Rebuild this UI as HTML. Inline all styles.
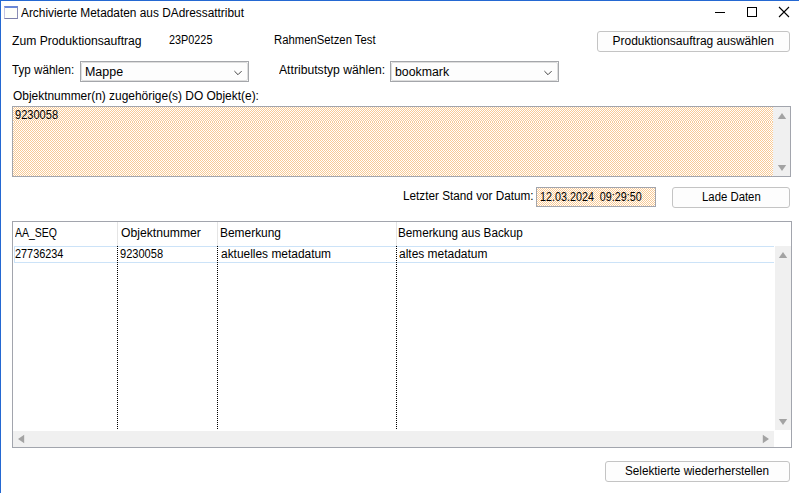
<!DOCTYPE html>
<html><head><meta charset="utf-8">
<style>
html,body{margin:0;padding:0;}
body{width:799px;height:493px;position:relative;overflow:hidden;background:#ffffff;}
.a{position:absolute;box-sizing:border-box;}
.t{position:absolute;font-family:"Liberation Sans",sans-serif;font-size:12px;line-height:14px;white-space:pre;color:#000;transform-origin:0 0;}
.btn{position:absolute;box-sizing:border-box;border:1px solid #c4c4c4;border-radius:3px;background:#fdfdfd;}
.combo{position:absolute;box-sizing:border-box;border:1px solid #a4a6aa;background:#fdfdfd;}
.combo .in{position:absolute;left:0;top:0;right:0;bottom:0;border:1px solid #dedede;border-radius:2px;}
.chk{background-color:#fff;background-image:conic-gradient(#f9ca95 25%,#fff 0 50%,#f9ca95 0 75%,#fff 0);background-size:2px 2px;}
.sb{position:absolute;background:#f0f0f0;}
.tri{position:absolute;width:0;height:0;}
.vdot{position:absolute;width:1px;background-image:linear-gradient(#000 50%,transparent 50%);background-size:1px 2px;}
</style></head><body>
<!-- window border -->
<div class="a" style="left:0;top:0;width:799px;height:1px;background:#2468d2"></div>
<div class="a" style="left:0;top:0;width:1px;height:493px;background:#2468d2"></div>

<!-- title icon -->
<div class="a" style="left:4px;top:6px;width:14px;height:13px;background:#fefefa;border-left:1px solid #c4c4e4;border-right:1px solid #8a8cb4;border-bottom:1px solid #7c7eaa;border-top:2px solid #6a88d8"></div>
<div class="t" style="left:21px;top:6px;transform:scaleX(0.989)">Archivierte Metadaten aus DAdressattribut</div>

<!-- caption buttons -->
<div class="a" style="left:715px;top:12px;width:10px;height:1px;background:#000"></div>
<div class="a" style="left:747px;top:7px;width:10px;height:10px;border:1px solid #000"></div>
<svg class="a" style="left:778px;top:6px" width="12" height="12" viewBox="0 0 12 12"><path d="M1 1L11 11M11 1L1 11" stroke="#000" stroke-width="1.1" fill="none"/></svg>

<!-- row 1 -->
<div class="t" style="left:12px;top:34px;transform:scaleX(1.012)">Zum Produktionsauftrag</div>
<div class="t" style="left:169.1px;top:33px;transform:scaleX(0.904)">23P0225</div>
<div class="t" style="left:273.9px;top:33px;transform:scaleX(0.942)">RahmenSetzen Test</div>
<div class="btn" style="left:597px;top:31px;width:193px;height:21px"></div>
<div class="t" style="left:612.5px;top:34px">Produktionsauftrag auswählen</div>

<!-- row 2 -->
<div class="t" style="left:12px;top:63px;transform:scaleX(0.970)">Typ wählen:</div>
<div class="combo" style="left:80px;top:61px;width:169px;height:21px"><div class="in"></div></div>
<div class="t" style="left:84.6px;top:65px;transform:scaleX(1.037)">Mappe</div>
<svg class="a" style="left:233px;top:70px" width="10" height="6" viewBox="0 0 10 6"><path d="M1.4 1.1L5 4.7L8.6 1.1" stroke="#444" stroke-width="1" fill="none"/></svg>

<div class="t" style="left:278.5px;top:63px;transform:scaleX(1.014)">Attributstyp wählen:</div>
<div class="combo" style="left:390px;top:61px;width:169px;height:21px"><div class="in"></div></div>
<div class="t" style="left:394.6px;top:65px;transform:scaleX(1.027)">bookmark</div>
<svg class="a" style="left:543px;top:70px" width="10" height="6" viewBox="0 0 10 6"><path d="M1.4 1.1L5 4.7L8.6 1.1" stroke="#444" stroke-width="1" fill="none"/></svg>

<!-- label + textarea -->
<div class="t" style="left:12.5px;top:89px;transform:scaleX(0.994)">Objektnummer(n) zugehörige(s) DO Objekt(e):</div>
<div class="a chk" style="left:12px;top:106px;width:779px;height:71px;border:1px solid #a2a5ad"></div>
<div class="a chk" style="left:13px;top:122px;width:760px;height:54px"></div>
<div class="sb" style="left:773px;top:107px;width:17px;height:69px"></div>
<svg class="a" style="left:777px;top:111px" width="10" height="9" viewBox="0 0 10 9"><path d="M0.8 8L5 2L9.2 8Z" fill="#a3a3a3"/></svg>
<svg class="a" style="left:777px;top:163px" width="10" height="9" viewBox="0 0 10 9"><path d="M0.8 2L5 8L9.2 2Z" fill="#a3a3a3"/></svg>
<div class="t" style="left:14.6px;top:108px;transform:scaleX(0.922)">9230058</div>

<!-- date row -->
<div class="t" style="left:402.8px;top:189px;transform:scaleX(0.979)">Letzter Stand vor Datum:</div>
<div class="a chk" style="left:536px;top:187px;width:120px;height:20px;border:1px solid #a2a5ad"></div>
<div class="t" style="left:539.6px;top:190px;transform:scaleX(0.897)">12.03.2024  09:29:50</div>
<div class="btn" style="left:672px;top:187px;width:118px;height:21px"></div>
<div class="t" style="left:701.5px;top:190px;transform:scaleX(0.947)">Lade Daten</div>

<!-- grid -->
<div class="a" style="left:12px;top:221px;width:780px;height:227px;border:1px solid #a2a5ad;background:#fff"></div>
<div class="a" style="left:117px;top:222px;width:1px;height:24px;background:#e5e5e5"></div>
<div class="a" style="left:217px;top:222px;width:1px;height:24px;background:#e5e5e5"></div>
<div class="a" style="left:396px;top:222px;width:1px;height:24px;background:#e5e5e5"></div>
<div class="t" style="left:15.25px;top:226px;transform:scaleX(0.875)">AA_SEQ</div>
<div class="t" style="left:120.7px;top:226px;transform:scaleX(1.015)">Objektnummer</div>
<div class="t" style="left:219.6px;top:226px;transform:scaleX(0.994)">Bemerkung</div>
<div class="t" style="left:398.4px;top:226px;transform:scaleX(0.979)">Bemerkung aus Backup</div>
<!-- row -->
<div class="a" style="left:14px;top:246px;width:760px;height:17px;border:1px solid #cce3f8;border-right:0"></div>
<div class="vdot" style="left:117px;top:246px;height:184px"></div>
<div class="vdot" style="left:217px;top:246px;height:184px"></div>
<div class="vdot" style="left:396px;top:246px;height:184px"></div>
<div class="t" style="left:14.7px;top:247px;transform:scaleX(0.907)">27736234</div>
<div class="t" style="left:119.6px;top:247px;transform:scaleX(0.922)">9230058</div>
<div class="t" style="left:220.7px;top:247px;transform:scaleX(0.994)">aktuelles metadatum</div>
<div class="t" style="left:399.4px;top:247px;transform:scaleX(0.997)">altes metadatum</div>
<!-- scrollbars -->
<div class="sb" style="left:775px;top:246px;width:16px;height:184px"></div>
<svg class="a" style="left:778px;top:250px" width="10" height="9" viewBox="0 0 10 9"><path d="M0.8 8L5 2L9.2 8Z" fill="#a3a3a3"/></svg>
<svg class="a" style="left:778px;top:417px" width="10" height="9" viewBox="0 0 10 9"><path d="M0.8 2L5 8L9.2 2Z" fill="#a3a3a3"/></svg>
<div class="sb" style="left:13px;top:431px;width:761px;height:16px"></div>
<svg class="a" style="left:16px;top:434px" width="10" height="10" viewBox="0 0 10 10"><path d="M8.2 0.8L2 5L8.2 9.2Z" fill="#a3a3a3"/></svg>
<svg class="a" style="left:761px;top:434px" width="10" height="10" viewBox="0 0 10 10"><path d="M1.8 0.8L8 5L1.8 9.2Z" fill="#a3a3a3"/></svg>

<!-- bottom button -->
<div class="btn" style="left:605px;top:461px;width:185px;height:21px"></div>
<div class="t" style="left:625.25px;top:464px;transform:scaleX(0.977)">Selektierte wiederherstellen</div>
</body></html>
